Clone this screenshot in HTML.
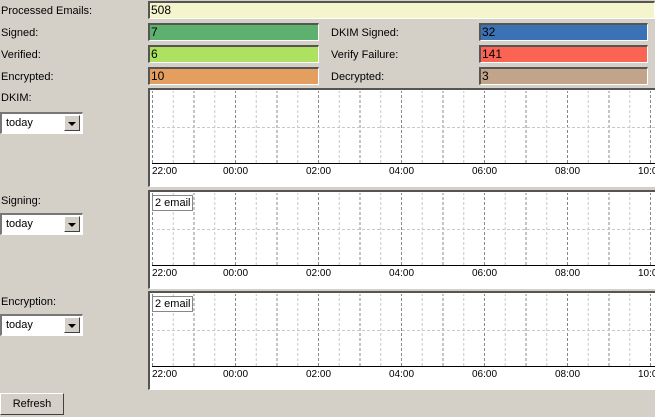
<!DOCTYPE html>
<html><head><meta charset="utf-8"><style>
body{margin:0;width:655px;height:417px;background:#d4d0c8;font:11px "Liberation Sans",sans-serif;color:#000;position:relative;overflow:hidden}
.a{position:absolute}
.lb{position:absolute;left:1px;line-height:14px}
.f{position:absolute;height:18px;box-sizing:border-box;border-top:2px solid #555;border-left:2px solid #555;border-right:1px solid #fff;border-bottom:1px solid #fff;padding-left:1px;line-height:14px;font-size:12px}
.sel{position:absolute;left:0;width:83px;height:22px;box-sizing:border-box;background:#fff;border-top:2px solid #777;border-left:2px solid #777;border-right:1px solid #fff;border-bottom:1px solid #fff}
.sel span{position:absolute;left:4px;top:3px;font-size:11px}
.sel i{position:absolute;right:2px;top:1px;width:16px;height:16px;box-sizing:border-box;background:#d4d0c8;border:1px solid #fff;border-right-color:#404040;border-bottom-color:#404040}
.sel i:after{content:"";position:absolute;left:3px;top:6px;border-left:4px solid transparent;border-right:4px solid transparent;border-top:4px solid #000}
.ch{position:absolute;left:148px;width:507px;height:99px;box-sizing:border-box;background:#fff;border-top:2px solid #555;border-left:2px solid #555;border-bottom:1px solid #fff}
.ch svg{position:absolute;left:0;top:0}
.tk{position:absolute;top:76px;font-size:10px}
.leg{position:absolute;left:2px;top:3px;border:1px solid #888;padding:0 2px;line-height:14px;background:#fff;font-size:11px}
</style></head><body>
<div class="lb" style="top:4px">Processed Emails:</div>
<div class="f" style="left:148px;top:1px;width:507px;background:#f5f5cd">508</div>
<div class="lb" style="top:26px">Signed:</div>
<div class="lb" style="top:48px">Verified:</div>
<div class="lb" style="top:70px">Encrypted:</div>
<div class="f" style="left:148px;top:23px;width:171px;background:#5db06e">7</div>
<div class="f" style="left:148px;top:45px;width:171px;background:#ade260">6</div>
<div class="f" style="left:148px;top:67px;width:171px;background:#e39e60">10</div>
<div class="a" style="left:331px;top:26px;line-height:14px">DKIM Signed:</div>
<div class="a" style="left:331px;top:48px;line-height:14px">Verify Failure:</div>
<div class="a" style="left:331px;top:70px;line-height:14px">Decrypted:</div>
<div class="f" style="left:479px;top:23px;width:169px;background:#3b72b5">32</div>
<div class="f" style="left:479px;top:45px;width:169px;background:#fb6352">141</div>
<div class="f" style="left:479px;top:67px;width:169px;background:#c1a48a">3</div>

<div class="lb" style="top:91px">DKIM:</div>
<div class="sel" style="top:112px"><span>today</span><i></i></div>
<div class="lb" style="top:194px">Signing:</div>
<div class="sel" style="top:213px"><span>today</span><i></i></div>
<div class="lb" style="top:295px">Encryption:</div>
<div class="sel" style="top:314px"><span>today</span><i></i></div>

<svg width="0" height="0" style="position:absolute"><defs>
<pattern id="g" patternUnits="userSpaceOnUse" x="2" y="0" width="41.5" height="200">
<line x1="0.5" y1="0" x2="0.5" y2="200" stroke="#888" stroke-dasharray="3,2"/>
<line x1="21.25" y1="0" x2="21.25" y2="200" stroke="#c8c8c8" stroke-dasharray="3,2"/>
</pattern></defs></svg>

<div class="ch" style="top:88px">
<svg width="505" height="97"><rect x="2" y="1" width="503" height="72" fill="url(#g)"/><line x1="2" y1="37.5" x2="505" y2="37.5" stroke="#c8c8c8" stroke-dasharray="3,2"/><line x1="2" y1="73.5" x2="505" y2="73.5" stroke="#000"/></svg>
<div class="tk" style="left:2px">22:00</div><div class="tk" style="left:73px">00:00</div><div class="tk" style="left:156px">02:00</div><div class="tk" style="left:239px">04:00</div><div class="tk" style="left:322px">06:00</div><div class="tk" style="left:405px">08:00</div><div class="tk" style="left:488px">10:00</div>
</div>
<div class="ch" style="top:190px">
<svg width="505" height="97"><rect x="2" y="1" width="503" height="72" fill="url(#g)"/><line x1="2" y1="37.5" x2="505" y2="37.5" stroke="#c8c8c8" stroke-dasharray="3,2"/><line x1="2" y1="73.5" x2="505" y2="73.5" stroke="#000"/></svg>
<div class="leg">2 email</div>
<div class="tk" style="left:2px">22:00</div><div class="tk" style="left:73px">00:00</div><div class="tk" style="left:156px">02:00</div><div class="tk" style="left:239px">04:00</div><div class="tk" style="left:322px">06:00</div><div class="tk" style="left:405px">08:00</div><div class="tk" style="left:488px">10:00</div>
</div>
<div class="ch" style="top:291px">
<svg width="505" height="97"><rect x="2" y="1" width="503" height="72" fill="url(#g)"/><line x1="2" y1="37.5" x2="505" y2="37.5" stroke="#c8c8c8" stroke-dasharray="3,2"/><line x1="2" y1="73.5" x2="505" y2="73.5" stroke="#000"/></svg>
<div class="leg">2 email</div>
<div class="tk" style="left:2px">22:00</div><div class="tk" style="left:73px">00:00</div><div class="tk" style="left:156px">02:00</div><div class="tk" style="left:239px">04:00</div><div class="tk" style="left:322px">06:00</div><div class="tk" style="left:405px">08:00</div><div class="tk" style="left:488px">10:00</div>
</div>

<div class="a" style="left:0;top:393px;width:64px;height:22px;box-sizing:border-box;border:1px solid #fff;border-right-color:#404040;border-bottom-color:#404040;text-align:center;line-height:20px">Refresh</div>
</body></html>
